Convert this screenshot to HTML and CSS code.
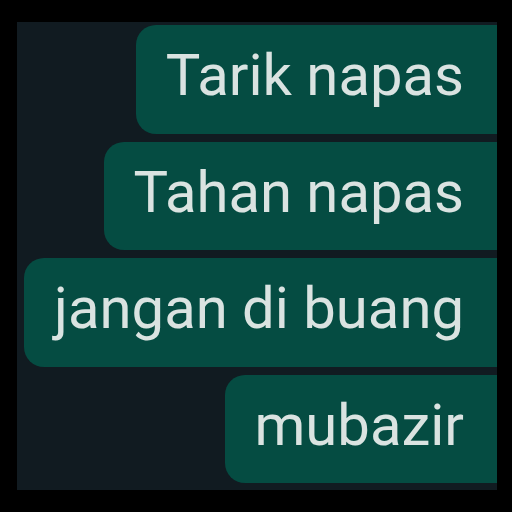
FILE: index.html
```html
<!DOCTYPE html>
<html>
<head>
<meta charset="utf-8">
<link rel="stylesheet" href="styles.css">
</head>
<body>
<div class="panel">
  <div class="bubble">Tarik napas</div>
  <div class="bubble">Tahan napas</div>
  <div class="bubble">jangan di buang</div>
  <div class="bubble">mubazir</div>
</div>
</body>
</html>
```
FILE: styles.css
```css
html, body {
  margin: 0;
  padding: 0;
  background: #000;
  width: 512px;
  height: 512px;
}
.panel {
  position: relative;
  margin: 22px 0 0 17px;
  width: 480px;
  height: 468px;
  box-sizing: border-box;
  background: #111b21;
  padding-top: 3px;
  display: flex;
  flex-direction: column;
  align-items: flex-end;
  gap: 8px;
  overflow: hidden;
}
.bubble {
  background: #054c42;
  color: #dae3e1;
  font-family: Roboto, "Liberation Sans", sans-serif;
  font-size: 58px;
  line-height: 66.5px;
  padding: 17px 33px 25px 30px;
  border-radius: 20px 0 0 20px;
}
```
